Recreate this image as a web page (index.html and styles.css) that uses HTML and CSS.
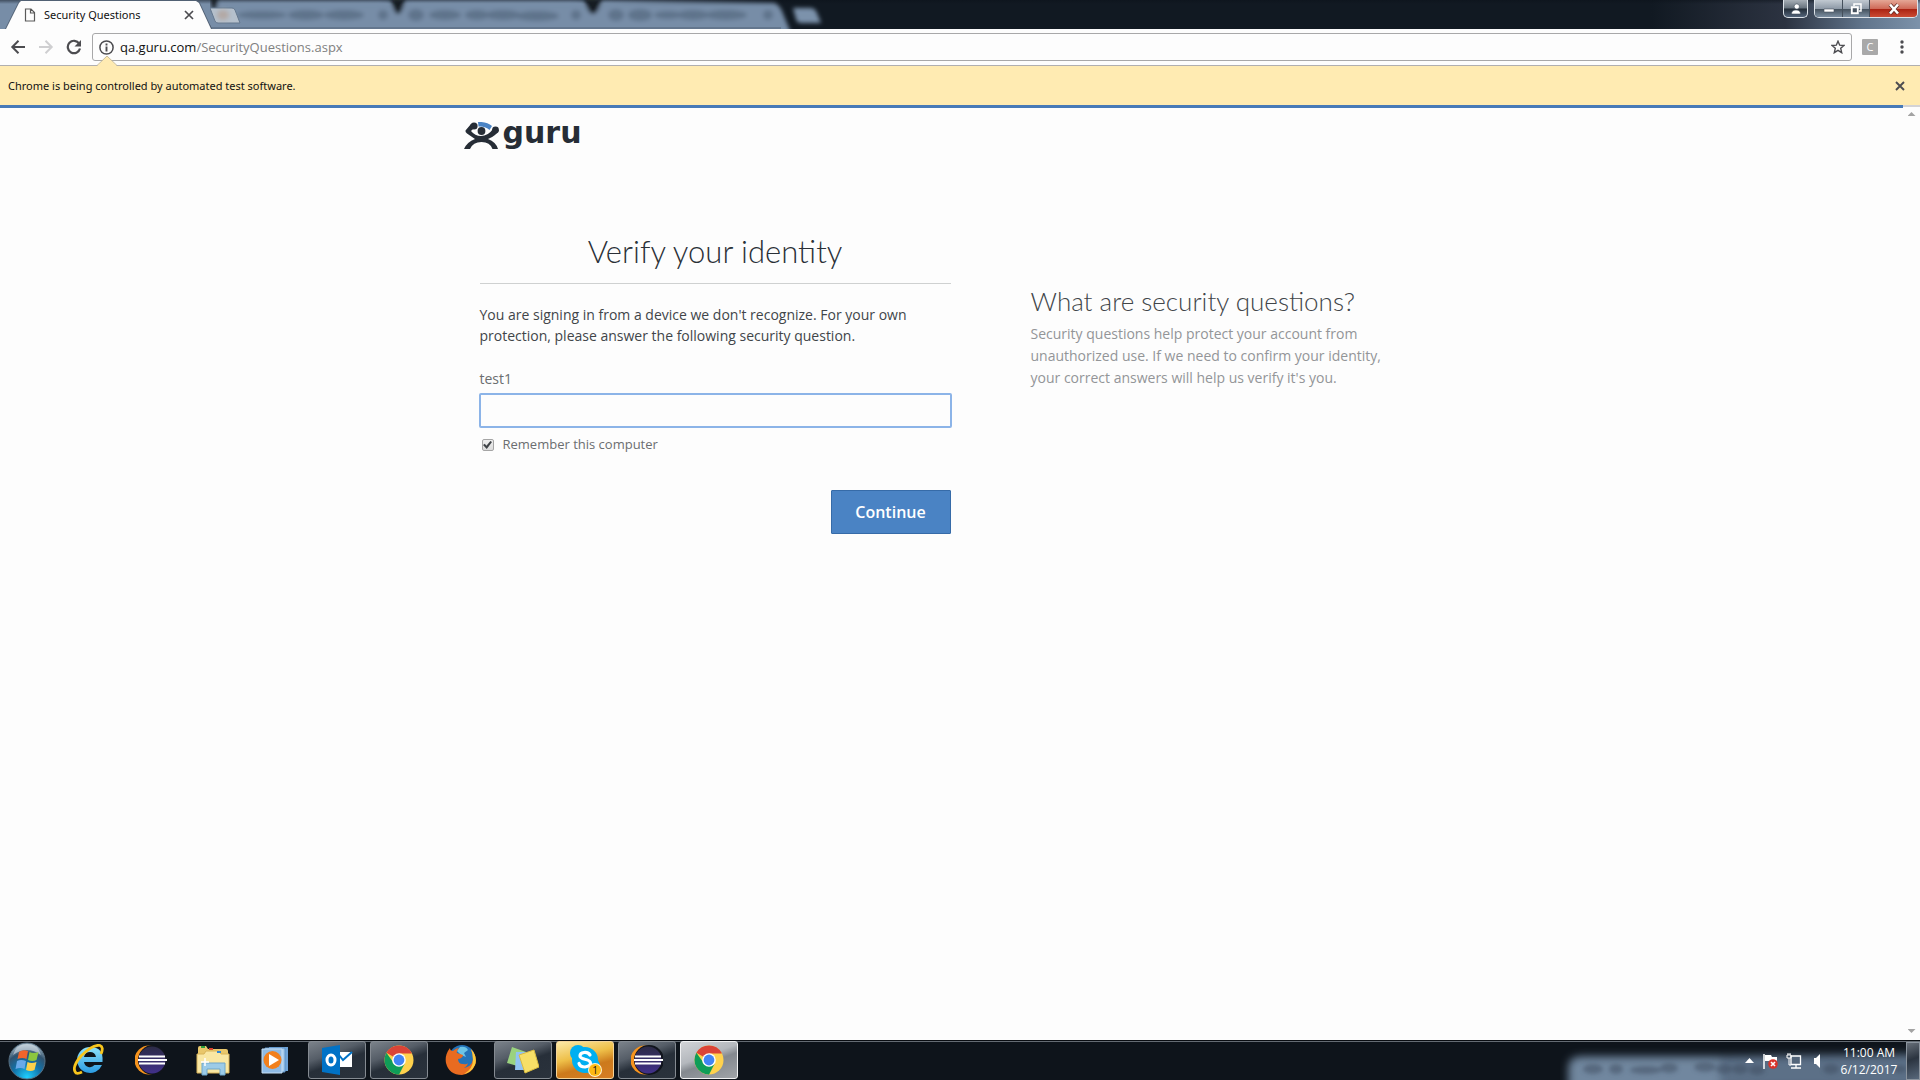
FILE: index.html
```html
<!DOCTYPE html>
<html lang="en">
<head>
<meta charset="utf-8">
<title>Security Questions</title>
<link rel="stylesheet" href="styles.css">
</head>
<body>
<svg class="defs" width="0" height="0" aria-hidden="true">
  <defs>
    <filter id="soft" x="-20%" y="-60%" width="140%" height="220%"><feGaussianBlur stdDeviation="2"/></filter>
    <filter id="softer" x="-20%" y="-60%" width="140%" height="220%"><feGaussianBlur stdDeviation="4"/></filter>
    <linearGradient id="ecl" x1="0" y1="0" x2="0" y2="1"><stop offset="0" stop-color="#2c2b46"/><stop offset="1" stop-color="#41308a"/></linearGradient>
    <radialGradient id="orb" cx=".5" cy=".95" r=".9"><stop offset="0" stop-color="#1fd0ff"/><stop offset=".45" stop-color="#1272a8"/><stop offset=".75" stop-color="#31536f"/><stop offset="1" stop-color="#9fb4c2"/></radialGradient>
    <linearGradient id="ie" x1="0" y1="0" x2="0" y2="1"><stop offset="0" stop-color="#8fe2fb"/><stop offset="1" stop-color="#2a9be2"/></linearGradient>
    <symbol id="eclipse" viewBox="0 0 32 32">
      <circle cx="14" cy="16" r="14.500" fill="#f7941e"/><circle cx="18" cy="16" r="15" fill="#10141c"/>
      <circle cx="17" cy="16" r="13.500" fill="url(#ecl)"/>
      <path d="M4 12.500h26M3 16h29M4 19.500h26" stroke="#fff" stroke-width="2"/>
    </symbol>
    <symbol id="chrome" viewBox="0 0 30 30">
      <circle cx="15" cy="15" r="14.500" fill="#ffd24d"/>
      <path d="M15 15 2.400 7.800A14.500 14.500 0 0 1 27.600 7.800L27.800 8.500H15z" fill="#db4437"/>
      <path d="M2.400 7.800A14.500 14.500 0 0 0 15 29.500l6-11.500-6-3-6 2z" fill="#0f9d58"/>
      <path d="M15 29.500l5.800-11L15 15z" fill="#ffd24d"/><path d="M15 29.500 20.600 18.500 15 20 10 19z" fill="#0f9d58"/>
      <circle cx="15" cy="15" r="6.800" fill="#fff"/><circle cx="15" cy="15" r="5.400" fill="#4285f4"/>
    </symbol>
  </defs>
</svg>

<header class="browser">
  <div class="tabstrip">
    <div class="tab-shape">
      <div class="tab">
        <svg class="tab-icon" width="12" height="14" viewBox="0 0 12 14"><path d="M1.500 1h5.500l3.500 3.500V13h-9zM6.500 1v4h4" fill="none" stroke="#5a5a5a" stroke-width="1.200"/></svg>
        <span class="tab-title">Security Questions</span>
        <button class="icon-button tab-close" aria-label="Close tab"><svg width="10" height="10" viewBox="0 0 10 10"><path d="M1 1l8 8M9 1 1 9" stroke="#4c4c50" stroke-width="1.700"/></svg></button>
      </div>
    </div>
    <svg class="other-tabs" width="620" height="29" viewBox="0 0 620 29" aria-hidden="true">
      <g filter="url(#soft)">
        <path d="M-14 3H170Q180 3 184 10L191 10Q194 3 200 3H362Q374 3 379 10L387 10Q390 3 396 3H564Q570 4 574 16L581 33H-14z" fill="#778da7"/>
        <path d="M0-6H10L6 9Q3 14 0 4zM180-2h16l-4 12q-4 8-8 0zM373-2h20l-5 12q-5 8-10 0z" fill="#131a24"/>
        <g fill="#485b71" opacity=".5">
          <ellipse cx="206" cy="15" rx="8" ry="6"/><ellipse cx="406" cy="15" rx="8" ry="6"/>
          <ellipse cx="52" cy="15" rx="25" ry="4"/><ellipse cx="96" cy="15" rx="18" ry="5"/><ellipse cx="134" cy="15" rx="20" ry="5"/><circle cx="173" cy="15" r="5"/>
          <ellipse cx="235" cy="15" rx="16" ry="5"/><ellipse cx="267" cy="15" rx="12" ry="5"/><ellipse cx="293" cy="15" rx="18" ry="5"/><ellipse cx="327" cy="16" rx="22" ry="5"/><circle cx="366" cy="15" r="5"/>
          <ellipse cx="430" cy="15" rx="12" ry="6"/><ellipse cx="458" cy="15" rx="14" ry="4"/><ellipse cx="483" cy="15" rx="16" ry="5"/><ellipse cx="516" cy="15" rx="21" ry="5"/><circle cx="558" cy="15" r="5"/>
        </g>
        <path d="M583 8h17q5 0 7 5l4 10h-20q-4 0-5-4z" fill="#7c92ab"/>
      </g>
      <path d="M-11 0 1 28H571" fill="none" stroke="#526174"/>
      <path d="M0 8h22q2 0 3 2l5 13H8q-2 0-3-2z" fill="#b5c0cc" stroke="#65788e"/>
      <ellipse cx="13" cy="15" rx="6" ry="5" fill="#b3a9a5" filter="url(#soft)"/>
    </svg>
    <div class="window-controls">
      <button class="win user" aria-label="Current user"><svg width="12" height="12" viewBox="0 0 12 12"><path d="M6 1a2.600 2.600 0 1 1 0 5 2.600 2.600 0 0 1 0-5zM1.500 11q0-4 4.500-4t4.500 4z" fill="#fff" stroke="#46525f" stroke-width=".6"/></svg></button>
      <div class="win-group">
        <button class="win min" aria-label="Minimize"><svg width="12" height="12" viewBox="0 0 12 12"><path d="M1 6h10v3H1z" fill="#fff" stroke="#46525f" stroke-width=".6"/></svg></button>
        <button class="win max" aria-label="Restore"><svg width="12" height="12" viewBox="0 0 12 12"><path d="M4 3V1h7v7H9" fill="none" stroke="#fff" stroke-width="1.500"/><path d="M1.800 4.300h6v6h-6z" fill="#46525f" stroke="#fff" stroke-width="1.900"/></svg></button>
        <button class="win close" aria-label="Close"><svg width="12" height="12" viewBox="0 0 12 12"><path d="M2 1.500l8 9M10 1.500l-8 9" stroke="#5b2a25" stroke-width="4"/><path d="M2 1.500l8 9M10 1.500l-8 9" stroke="#fff" stroke-width="2.600"/></svg></button>
      </div>
    </div>
  </div>

  <div class="toolbar">
    <button class="icon-button" aria-label="Back"><svg width="16" height="16" viewBox="0 0 16 16"><path d="M15 8H2.500M8.500 1.800 2.300 8l6.200 6.200" fill="none" stroke="#4c4c50" stroke-width="2"/></svg></button>
    <button class="icon-button" aria-label="Forward"><svg width="16" height="16" viewBox="0 0 16 16"><path d="M1 8h12.500M7.500 1.800 13.700 8l-6.200 6.200" fill="none" stroke="#cfcfd1" stroke-width="2"/></svg></button>
    <button class="icon-button" aria-label="Reload"><svg width="16" height="16" viewBox="0 0 16 16"><path d="M13.200 4.600A6.200 6.200 0 1 0 14 9.500" fill="none" stroke="#4c4c50" stroke-width="2.200"/><path d="M15 1v6.500H8.500z" fill="#4c4c50"/></svg></button>
    <div class="omnibox">
      <svg width="15" height="15" viewBox="0 0 15 15"><circle cx="7.500" cy="7.500" r="6.600" fill="none" stroke="#4c4c50" stroke-width="1.500"/><path d="M7.500 6.500v5M7.500 3.500v2" stroke="#4c4c50" stroke-width="1.900"/></svg>
      <div class="url">qa.guru.com<span>/SecurityQuestions.aspx</span></div>
      <button class="icon-button" aria-label="Bookmark"><svg width="14" height="14" viewBox="0 0 14 14"><path d="M7 1.200l1.700 4 4.300.3-3.300 2.800 1 4.400L7 10.400l-3.700 2.300 1-4.400L1 5.500l4.300-.3z" fill="none" stroke="#4c4c50" stroke-width="1.400"/></svg></button>
    </div>
    <button class="extension" aria-label="Extension C">C</button>
    <button class="icon-button menu" aria-label="Menu"><svg width="4" height="14" viewBox="0 0 4 14"><g fill="#4c4c50"><circle cx="2" cy="2" r="1.700"/><circle cx="2" cy="7" r="1.700"/><circle cx="2" cy="12" r="1.700"/></g></svg></button>
  </div>

  <div class="infobar">
    <svg class="notch" width="20" height="11" viewBox="0 0 20 11"><path d="M0 11 10 1l10 10z" fill="#ffebb2"/><path d="M0 10.500 10 1l10 9.500" fill="none" stroke="#c9bd9b"/></svg>
    <span>Chrome is being controlled by automated test software.</span>
    <button class="icon-button" aria-label="Dismiss"><svg width="10" height="10" viewBox="0 0 10 10"><path d="M1 1l8 8M9 1 1 9" stroke="#4c4c50" stroke-width="1.900"/></svg></button>
  </div>
</header>

<div class="viewport">
  <main class="page">
    <div class="container">
      <a class="logo" href="#" aria-label="guru">
        <svg width="36" height="28" viewBox="0 0 36 28"><path d="M14 0q9-.5 14 4l-2.500 4q-4-4-11-3.500z" fill="#4a83c4"/><g fill="#262d36"><circle cx="10" cy="4" r="3.600"/><circle cx="31.500" cy="8" r="3.400"/><circle cx="17.500" cy="9" r="3.900"/><path d="M7 2 1.500 8.500Q1 10 3 11.500L11 17Q3 20 0 27h6Q9 20 17.500 20T28.500 27H34Q32 20 24 17q8-3 11-9l-6-1q-5 7-12 7Q11 14 7 9l4-4z"/></g></svg>
        <span>guru</span>
      </a>
      <div class="columns">
        <form class="verify">
          <h1>Verify your identity</h1>
          <p class="intro">You are signing in from a device we don't recognize. For your own protection, please answer the following security question.</p>
          <label class="question" for="answer">test1</label>
          <input class="answer" id="answer" type="text">
          <div class="remember"><input id="remember" type="checkbox" checked><label for="remember">Remember this computer</label></div>
          <button class="continue" type="button">Continue</button>
        </form>
        <aside class="help">
          <h2>What are security questions?</h2>
          <p>Security questions help protect your account from unauthorized use. If we need to confirm your identity, your correct answers will help us verify it's you.</p>
        </aside>
      </div>
    </div>
  </main>
  <div class="scrollbar" aria-hidden="true"><i class="up"></i><i class="down"></i></div>
</div>

<footer class="taskbar">
  <nav class="apps">
    <button class="start" aria-label="Start"><svg width="38" height="38" viewBox="0 0 38 38"><circle cx="19" cy="19" r="18" fill="url(#orb)" stroke="#577083"/><path d="M5 13Q19 3 33 13 30 2 19 2T5 13z" fill="#d5e0e7" opacity=".6"/><path d="M11 10q4-3 9-1l-1.500 8q-4-2-9 0z" fill="#f0642b"/><path d="M21.500 10q4 2 9 0l-2 8q-4 2-8.500 0z" fill="#8cc63f"/><path d="M9 19q4-2 9 0l-1.500 8q-4-2-9 0z" fill="#69a9e8"/><path d="M19.500 20q4 2 9 0l-2 8q-4 2-8.500 0z" fill="#fbd14b"/></svg></button>
    <button class="app" aria-label="Internet Explorer"><svg width="32" height="32" viewBox="0 0 32 32"><path d="M17 3a13 13 0 1 0 12 18h-7.500a6 6 0 0 1-10.500-3h18.500Q31 3 17 3zM11 13q1-5 6-5t6 5z" fill="url(#ie)"/><path d="M28 10q3-7-1-8.500Q20 0 8 12-2 24 3 29q2 1 6-1" fill="none" stroke="#f8c51c" stroke-width="2.800"/></svg></button>
    <button class="app" aria-label="Eclipse"><svg width="32" height="32"><use href="#eclipse"/></svg></button>
    <button class="app" aria-label="File Explorer"><svg width="34" height="32" viewBox="0 0 34 32"><path d="M2 4q0-2 2-2h6l2 3h18q2 0 2 2v21H2z" fill="#e9c76b"/><path d="M1 10h7l2-3h13l2 3h8v19H1z" fill="#f9e7a3" stroke="#d9b45a"/><path d="M5 3h4" stroke="#2e9e3d" stroke-width="2"/><path d="M13 5h4" stroke="#d8432e" stroke-width="2"/><path d="M21 8h4" stroke="#2f86d6" stroke-width="2"/><path d="M6 31V19h23v12h-5v-6H11v6z" fill="#9ccbe8" stroke="#6ea6cb"/><path d="M9 14v8M5 18h8" stroke="#fff" stroke-width="1.500"/></svg></button>
    <button class="app" aria-label="Media Player"><svg width="28" height="28" viewBox="0 0 28 28"><path d="M8 1h19v24H8z" fill="#6fa4d8"/><path d="M4 2h20v24H4z" fill="#a6cbec" stroke="#5b90c6"/><path d="M1 3h20v24H1z" fill="#8fbbe5" stroke="#c6dff4"/><circle cx="11.500" cy="14" r="9" fill="#f2801d"/><path d="M8 8l10 6-10 6z" fill="#fff"/></svg></button>
    <button class="app open" aria-label="Outlook"><svg width="32" height="32" viewBox="0 0 32 32"><path d="M18 8h13v15H18z" fill="#fff"/><path d="M18 11l4 5 9-8" fill="none" stroke="#0072c6" stroke-width="2"/><path d="M1 4 19 1v30L1 28z" fill="#0072c6"/><ellipse cx="10" cy="16" rx="4" ry="5" fill="none" stroke="#fff" stroke-width="3"/></svg></button>
    <button class="app open" aria-label="Chrome"><svg width="30" height="30"><use href="#chrome"/></svg></button>
    <button class="app" aria-label="Firefox"><svg width="32" height="32" viewBox="0 0 32 32"><circle cx="17" cy="14" r="13" fill="#2473b8"/><path d="M15 3q6-1 8 3l-4 3 2 4-5-2-4-4z" fill="#6cc4e6"/><path d="M26 5q7 8 4 16T17 31Q4 31 1 19-.500 11 5 4q0 3 3 3 3-3 6-3-3 3-2 5l6 2q0 3-5 4 0 5 5 5 4 1 5-1-1 5-7 5 11 0 12-9 0-5-2-10z" fill="#e96b20"/><path d="M26 5q7 8 4 16-4 8-11 9 9-5 9-14 0-6-2-11z" fill="#fbc93b"/></svg></button>
    <button class="app open" aria-label="Sticky Notes"><svg width="32" height="28" viewBox="0 0 32 28"><path d="M5 1l14 5-5 15L0 17z" fill="#9ad27f"/><path d="M9 6h15v18H8z" fill="#91c3f2"/><path d="M12 9l15-5 5 17-14 6z" fill="#f7df67" stroke="#d9bc42"/></svg></button>
    <button class="app alert" aria-label="Skype, 1 notification"><svg width="32" height="32" viewBox="0 0 32 32"><circle cx="9" cy="9" r="8" fill="#00aff0"/><circle cx="23" cy="22" r="8" fill="#00aff0"/><circle cx="16" cy="16" r="13" fill="#00aff0"/><path d="M21 11q-2-3-6-2.500-4 .5-4 3.500 0 2 5 3.300 5.500 1.200 5.500 4T16 23q-5 0-6-3.500" fill="none" stroke="#fff" stroke-width="3.200" stroke-linecap="round"/></svg><span class="badge">1</span></button>
    <button class="app open" aria-label="Eclipse window"><svg width="32" height="32"><use href="#eclipse"/></svg></button>
    <button class="app active" aria-label="Chrome window"><svg width="30" height="30"><use href="#chrome"/></svg></button>
  </nav>
  <div class="tray">
    <svg class="tray-haze" width="360" height="38" viewBox="0 0 360 38" aria-hidden="true"><g filter="url(#softer)"><path d="M8 26q0-12 14-12h140l200-2v34H8z" fill="#5b6f87"/><path d="M10 26q0-10 12-10h138v32H10z" fill="#71879f"/></g><g filter="url(#soft)" fill="#3c4b5f" opacity=".5"><ellipse cx="33" cy="27" rx="10" ry="5"/><ellipse cx="56" cy="27" rx="7" ry="5"/><ellipse cx="86" cy="28" rx="16" ry="4"/><ellipse cx="109" cy="26" rx="9" ry="5"/><ellipse cx="145" cy="25" rx="11" ry="5"/><ellipse cx="164" cy="27" rx="8" ry="5"/><ellipse cx="180" cy="27" rx="8" ry="5"/><ellipse cx="197" cy="28" rx="8" ry="5"/><ellipse cx="271" cy="27" rx="8" ry="5"/><ellipse cx="340" cy="27" rx="7" ry="4"/></g></svg>
    <div class="tray-icons">
      <svg width="9" height="5" viewBox="0 0 9 5"><path d="M0 5 4.500 0 9 5z" fill="#fff"/></svg>
      <svg width="16" height="16" viewBox="0 0 16 16"><path d="M2 1v15" stroke="#fff" stroke-width="1.500"/><path d="M3 2h6l1 2h5v5H8L7 8H3z" fill="#fff"/><circle cx="11" cy="11" r="4.800" fill="#d9342b"/><path d="M9 9l4 4M13 9l-4 4" stroke="#fff" stroke-width="1.600"/></svg>
      <svg width="16" height="16" viewBox="0 0 16 16"><path d="M5 3h9.500v8.500H5z" fill="#53657a" stroke="#fff" stroke-width="1.300"/><path d="M10 12v2.500M5 15h10" stroke="#fff" stroke-width="1.300"/><path d="M1 2h4v3H1zM3 5v7h2M2 0v2M4 0v2" fill="none" stroke="#fff"/></svg>
      <svg width="16" height="16" viewBox="0 0 16 16"><path d="M4 5h2l4-4v14l-4-4H4z" fill="#fff"/></svg>
    </div>
    <div class="clock"><time>11:00 AM</time><time>6/12/2017</time></div>
    <button class="show-desktop" aria-label="Show desktop"></button>
  </div>
</footer>
</body>
</html>
```
FILE: styles.css
```css
* { box-sizing: border-box; }

body {
  margin: 0;
  min-height: 100vh;
  display: flex;
  flex-direction: column;
  background: #fdfdfd;
  color: #414549;
  font: 14px/22px "Open Sans", sans-serif;
}

h1, h2, p { margin: 0; }
button { font: inherit; padding: 0; cursor: pointer; }
svg { display: block; flex: none; }
.defs { position: absolute; }

.icon-button {
  display: grid;
  place-items: center;
  flex: none;
  border: 0;
  background: none;
}

/* Tab strip */
.tabstrip {
  display: flex;
  height: 29px;
  overflow: hidden;
  background:
    linear-gradient(rgba(12, 18, 26, .5), transparent 4px),
    linear-gradient(90deg, #778da7 0, #778da7 600px, #111922 780px, #111922 86%, #2c3341 93%, #60748b 97%, #7c92aa);
}

.tab-shape {
  flex: none;
  width: 207px;
  margin-left: 5px;
  z-index: 1;
  background: #526174;
  clip-path: polygon(0 100%, 13px 3px, 15px 0, 192px 0, 195px 3px, 100% 100%);
}

.tab {
  display: flex;
  align-items: center;
  height: 29px;
  padding: 1px 17px 0 19px;
  background: #fdfdfd;
  clip-path: polygon(1px 100%, 14px 3px, 16px 1px, 191px 1px, 194px 3px, 206px 100%);
}

.tab-title {
  flex: 1;
  margin-left: 8px;
  color: #111;
  font: 11px/16px "Noto Sans", sans-serif;
  white-space: nowrap;
}

.tab-close { margin-right: 1px; }
.other-tabs { margin-left: -2px; }

.window-controls {
  display: flex;
  gap: 6px;
  height: 19px;
  margin: 0 2px 0 auto;
}

.win {
  display: grid;
  place-items: center;
  height: 18px;
  border: 0;
  border-right: 1px solid #45505c;
  background: linear-gradient(#c1c9d1, #8e9aa7 48%, #46535f 52%, #8295a9);
}

.user {
  width: 25px;
  border: 1px solid #dde3e9;
  border-top: 0;
  border-radius: 0 0 5px 5px;
  background: linear-gradient(#a6aeb6, #66717c 48%, #222c37 52%, #53647a);
}

.win-group {
  display: flex;
  overflow: hidden;
  height: 18px;
  border: 1px solid #dde3e9;
  border-top: 0;
  border-radius: 0 0 5px 5px;
}

.min { width: 28px; }
.max { width: 27px; }
.close {
  width: 47px;
  border: 0;
  background: linear-gradient(#e5a796, #cf6a58 48%, #ab2413 52%, #cf5038);
}

/* Toolbar */
.toolbar {
  display: flex;
  align-items: center;
  gap: 12px;
  height: 37px;
  padding: 0 16px 0 10px;
  border-bottom: 1px solid #b0afb0;
  background: #fdfdfd;
}

.omnibox {
  display: flex;
  align-items: center;
  flex: 1;
  height: 28px;
  margin-left: -2px;
  padding: 0 6px;
  border: 1px solid #a8a8a9;
  border-radius: 3px;
}

.url {
  flex: 1;
  margin-left: 6px;
  color: #111;
  font: 13px/20px "Open Sans", sans-serif;
}

.url span { color: #808080; }

.extension {
  width: 16px;
  height: 16px;
  margin: 0 10px 0 -2px;
  border: 0;
  border-radius: 1px;
  background: #a9a9a9;
  color: #fff;
  font: 11px/16px "Open Sans", sans-serif;
}

/* Infobar */
.infobar {
  position: relative;
  display: flex;
  align-items: center;
  justify-content: space-between;
  height: 39px;
  padding: 1px 15px 0 8px;
  background: #ffebb2;
  color: #111;
  font: 11px/16px "Noto Sans", sans-serif;
}

.notch {
  position: absolute;
  left: 97px;
  bottom: 100%;
}

/* Web page */
.viewport {
  display: flex;
  flex: 1;
}

.page {
  flex: 1;
  border-top: 3px solid #477ab8;
}

.container {
  max-width: 976px;
  margin: 0 auto;
  padding-top: 13px;
}

.logo {
  display: flex;
  align-items: center;
  gap: 3px;
  height: 30px;
  color: #262d36;
  font: bold 30px/30px "DejaVu Sans", sans-serif;
  text-decoration: none;
}

.logo span { margin-top: -6px; }

.columns {
  display: grid;
  grid-template-columns: 471px 1fr;
  gap: 80px;
  padding: 78px 16px 0;
}

.verify {
  display: flex;
  flex-direction: column;
  color: #414549;
}

h1, h2 {
  color: #2a3037;
  font-family: Lato, sans-serif;
  font-weight: 300;
}

h1 {
  padding-bottom: 10px;
  border-bottom: 1px solid #cfd1d1;
  font-size: 31px;
  line-height: 44px;
  text-align: center;
}

.intro {
  margin-top: 20px;
  line-height: 21px;
}

.question {
  margin-top: 22px;
  color: #6b6e70;
}

.answer {
  height: 35px;
  margin: 3px -1px 0;
  padding: 0 8px;
  border: 2px solid #8cb4e8;
  border-radius: 2px;
  outline: 0;
  background: #fdfdfd;
  font: inherit;
}

.remember {
  display: flex;
  align-items: center;
  gap: 9px;
  margin-top: 5px;
  color: #6b6e70;
  font-size: 13px;
}

.remember input {
  appearance: none;
  display: grid;
  place-items: center;
  width: 12px;
  height: 12px;
  margin: 2px 0 0 2px;
  border: 1px solid #a5a5a5;
  border-radius: 2px;
  background: linear-gradient(#efefef, #dcdcdc);
}

.remember input:checked::before {
  content: "";
  width: 9px;
  height: 8px;
  background: #3f4347;
  clip-path: polygon(0 50%, 20% 35%, 38% 60%, 82% 0, 100% 14%, 42% 100%);
}

.continue {
  align-self: flex-end;
  width: 120px;
  height: 44px;
  margin-top: 35px;
  border: 1px solid #366ba8;
  border-radius: 1px;
  background: #4a83c4;
  color: #fff;
  font-size: 16px;
  font-weight: 600;
}

.help {
  width: 360px;
  padding-top: 54px;
  color: #939598;
}

h2 {
  margin-bottom: 4px;
  color: #414549;
  font-size: 26px;
  line-height: 36px;
  white-space: nowrap;
}

.scrollbar {
  display: flex;
  flex-direction: column;
  justify-content: space-between;
  align-items: center;
  width: 17px;
  padding: 5px 0 7px;
  border-top: 2px solid #d3d3d6;
}

.up, .down {
  width: 8px;
  height: 4px;
  background: #a3a3a3;
}

.up { clip-path: polygon(0 100%, 50% 0, 100% 100%); }
.down { clip-path: polygon(0 0, 50% 100%, 100% 0); }

/* Taskbar */
.taskbar {
  display: flex;
  justify-content: space-between;
  height: 40px;
  border-top: 1px solid #0a0e13;
  background: #0e141b;
  box-shadow: inset 0 1px #646b73;
}

.apps {
  display: flex;
  align-items: flex-start;
  gap: 4px;
}

.start, .app {
  position: relative;
  display: grid;
  place-items: center;
  width: 58px;
  height: 38px;
  border: 1px solid transparent;
  border-radius: 3px;
  background: none;
}

.start {
  width: 56px;
  padding-right: 2px;
}

.open {
  border-color: #858b92;
  background: linear-gradient(160deg, #7b828a 0, #555d67 35%, #272f39 55%, #2a323c);
}

.alert {
  border-color: #f4d49a;
  background: linear-gradient(165deg, #fbe9a8 0, #eebf48 40%, #cc7a1c 65%, #d67d24);
}

.active {
  border-color: #f1f2f3;
  background: linear-gradient(160deg, #d2d4d7 0, #b4b8bd 40%, #84898f 55%, #a0a4a8);
}

.badge {
  position: absolute;
  right: 12px;
  bottom: 2px;
  width: 12px;
  height: 12px;
  border-radius: 50%;
  background: #fdb913;
  box-shadow: 0 0 0 1px #fff3cf;
  color: #111;
  font: 10px/12px "Open Sans", sans-serif;
}

.tray {
  position: relative;
  display: flex;
  align-items: center;
  color: #fff;
}

.tray-haze {
  position: absolute;
  right: 0;
  bottom: 0;
}

.tray-icons {
  position: relative;
  display: flex;
  align-items: center;
  gap: 8px;
}

.clock {
  position: relative;
  display: flex;
  flex-direction: column;
  width: 80px;
  padding-left: 6px;
  font: 12px/17px "Open Sans", sans-serif;
  text-align: center;
}

.show-desktop {
  position: relative;
  width: 14px;
  height: 38px;
  border: 1px solid #8b949e;
  background: linear-gradient(160deg, #666e78, #2b3440 45%, #58687b);
}
```
